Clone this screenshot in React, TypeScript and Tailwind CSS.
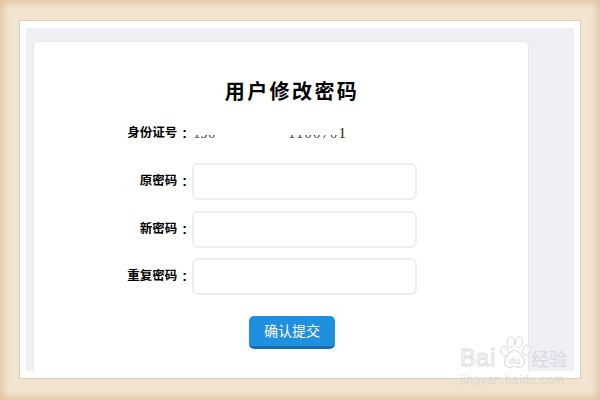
const fontStack = { fontFamily: '"Liberation Sans", "Noto Sans CJK SC", sans-serif' };

function FieldLabel({ text }: { text: string }) {
  return (
    <label className="flex w-[159px] justify-end pr-[5px] text-[12.5px] font-bold text-black">
      <span>{text}</span>
      <span className="ml-[5px] text-[14px] leading-[18px]">:</span>
    </label>
  );
}

function PasswordRow({ label }: { label: string }) {
  return (
    <div className="flex items-center">
      <FieldLabel text={label} />
      <input
        type="password"
        className="h-[37px] w-[225px] rounded-[6px] border-2 border-[#eceef1] bg-white"
      />
    </div>
  );
}

function BaiduMark() {
  return (
    <div className="absolute left-[460px] top-[335px]">
      <div className="flex items-end">
        <span className="mb-[1px] text-[23px] leading-none tracking-[1px] text-white [-webkit-text-stroke:1px_#dcdce0]">Bai</span>
        <svg viewBox="0 0 36 40" className="ml-[2px] h-[36px] w-[33px]">
          <g fill="#fff" stroke="#dcdce0" strokeWidth="1.2">
            <ellipse cx="7" cy="18" rx="4" ry="5.5" transform="rotate(-20 7 18)" />
            <ellipse cx="14" cy="8" rx="4" ry="6" />
            <ellipse cx="23" cy="8" rx="4" ry="6" />
            <ellipse cx="31" cy="17" rx="4" ry="5.5" transform="rotate(20 31 17)" />
            <path d="M18 17c5 0 7 5 10 9 3 5 0 10-5 10-2 0-3-1-5-1s-3 1-5 1c-5 0-8-5-5-10 3-4 5-9 10-9z" />
          </g>
          <text x="18" y="32" textAnchor="middle" fontSize="11" fill="#d4d4d8">du</text>
        </svg>
        <span className="mb-[2px] text-[18px] leading-none text-[#d8d8de]">经验</span>
      </div>
      <div className="mt-[3px] text-[12.5px] leading-none tracking-[0.2px] text-[#ddd8d0]">jingyan.baidu.com</div>
    </div>
  );
}

export default function App() {
  return (
    <div
      style={fontStack}
      className="relative h-[400px] w-[600px] overflow-hidden bg-[#f2e4cf] px-[19px] pb-[21px] pt-[20px] shadow-[inset_0_0_7px_3px_#e2c3a0]"
    >
      <div className="h-full border border-[#d6cfc0] bg-white px-[6px] py-[7px]">
        <div className="h-full bg-[#eff0f6] pl-[7px] pr-[45px] pt-[13px]">
          <div className="h-[331px] rounded-t-[5px] border-l border-r border-t border-[#e6e7ec] bg-white">
            <h1 className="pl-[22px] pt-[36px] text-center text-[20px] font-bold leading-[28px] tracking-[2.4px] text-black">
              用户修改密码
            </h1>
            <div className="ml-[-1px] mt-[17px] flex h-[20px] items-center">
              <FieldLabel text="身份证号" />
              <div
                className="flex items-end pl-[1px] text-[15px] leading-none"
                style={{ fontFamily: '"Liberation Serif", serif' }}
              >
                <span className="w-[95px]">
                  <span className="bg-[linear-gradient(to_bottom,transparent_60%,#333_60%)] bg-clip-text text-transparent">190</span>
                </span>
                <span className="bg-[linear-gradient(to_bottom,transparent_60%,#333_60%)] bg-clip-text tracking-[1px] text-transparent">110070</span>
                <span className="text-[#222]">1</span>
              </div>
            </div>
            <div className="ml-[-1px] mt-[20px] flex flex-col gap-[10.5px]">
              <PasswordRow label="原密码" />
              <PasswordRow label="新密码" />
              <PasswordRow label="重复密码" />
            </div>
            <div className="mt-[21px] flex justify-center pl-[22px]">
              <button className="h-[33px] w-[86px] rounded-[5px] border-b-[3px] border-[#1a6cab] bg-[#1f8fe0] text-[14px] text-white">
                确认提交
              </button>
            </div>
          </div>
        </div>
      </div>
      <BaiduMark />
    </div>
  );
}
